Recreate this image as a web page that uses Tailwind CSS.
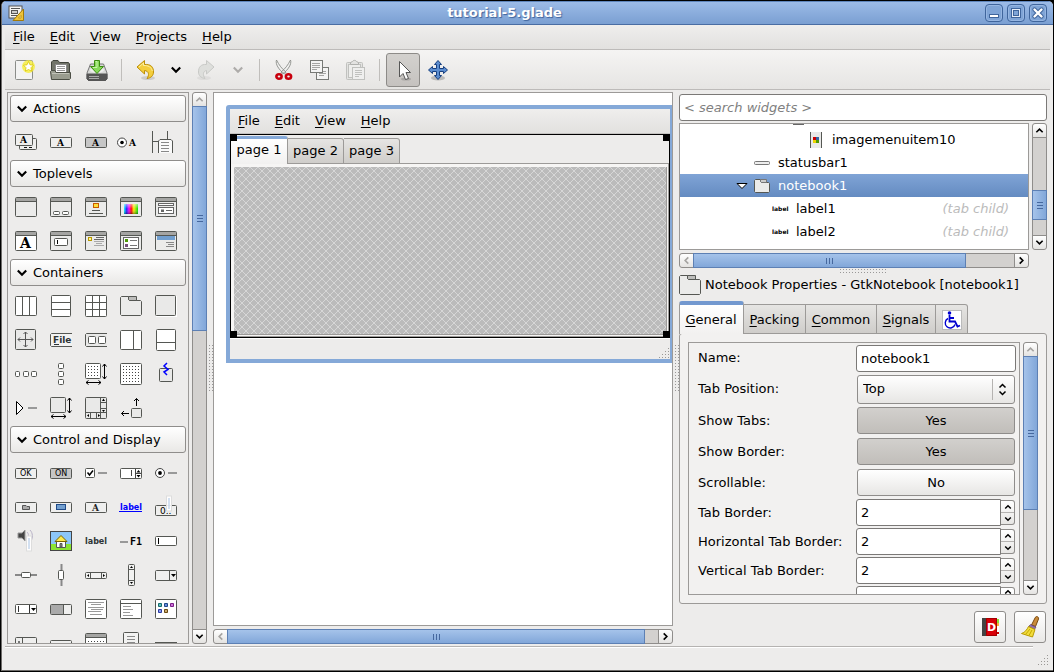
<!DOCTYPE html>
<html lang="en">
<head>
<meta charset="utf-8">
<title>tutorial-5.glade</title>
<script src="https://cdn.jsdelivr.net/npm/@tailwindcss/browser@4"></script>
</head>
<body class="h-screen overflow-hidden bg-black font-['DejaVu_Sans',sans-serif] text-[13px] leading-4 text-black">

<svg class="absolute size-0" aria-hidden="true">
  <defs>
    <linearGradient id="rainbow"><stop offset="0" stop-color="#0ff"/><stop offset=".18" stop-color="#22f"/><stop offset=".36" stop-color="#f0f"/><stop offset=".52" stop-color="#f00"/><stop offset=".7" stop-color="#fe0"/><stop offset="1" stop-color="#0d0"/></linearGradient>
    <linearGradient id="shade" x2="0" y2="1"><stop offset="0" stop-color="#fff" stop-opacity=".55"/><stop offset=".5" stop-color="#fff" stop-opacity="0"/><stop offset="1" stop-color="#000" stop-opacity=".4"/></linearGradient>
    <pattern id="dots" width="3" height="3" patternUnits="userSpaceOnUse"><rect x="1" y="1" width="1" height="1" fill="#444"/></pattern>
    <pattern id="hatch" width="8" height="8" patternUnits="userSpaceOnUse"><rect width="8" height="8" fill="#bbb"/><path d="M0 0h1v1H0zM1 1h1v1H1zM2 2h1v1H2zM3 3h1v1H3zM4 4h1v1H4zM5 5h1v1H5zM6 6h1v1H6zM7 7h1v1H7zM7 0h1v1H7zM6 1h1v1H6zM5 2h1v1H5zM4 3h1v1H4zM3 4h1v1H3zM2 5h1v1H2zM1 6h1v1H1zM0 7h1v1H0z" fill="#d6d6d6" shape-rendering="crispEdges"/></pattern>
    <symbol id="win" viewBox="0 0 24 24"><rect x="1.500" y="2.500" width="21" height="19" rx="1" fill="#ebebea" stroke="#555753"/><path d="M2 4.500H22" stroke="#a5a5a3" stroke-width="3"/><path d="M2 6.500H22" stroke="#555753"/></symbol>
    <symbol id="btn" viewBox="0 0 24 24"><rect x="1.500" y="7.500" width="21" height="10" rx="1" fill="#efefee" stroke="#555753"/></symbol>
    <symbol id="folder" viewBox="0 0 24 24"><path d="M1.500 20.500V3.500L2.500 2.500H9.500V5.500L10.500 6.500H21.500L22.500 7.500V20.500L21.500 21.500H2.500Z" fill="#ebebea" stroke="#555753"/><path d="M9.500 2.500H17.500V6.500H10.500L9.500 5.500Z" fill="#bdbdbb" stroke="#555753"/></symbol>
    <symbol id="size" viewBox="0 0 24 24"><path d="M20.500 2V17M18.500 4.500L20.500 2L22.500 4.500M18.500 14.500L20.500 17L22.500 14.500M2 20.500H17M4.500 18.500L2 20.500L4.500 22.500M14.500 18.500L17 20.500L14.500 22.500" fill="none" stroke="#000"/></symbol>
    <symbol id="down" viewBox="0 0 10 10"><path d="M1.500 3L5 6.500L8.500 3" fill="none" stroke="currentColor" stroke-width="1.800"/></symbol>
    <symbol id="up" viewBox="0 0 10 10"><path d="M1.500 7L5 3.500L8.500 7" fill="none" stroke="currentColor" stroke-width="1.800"/></symbol>
    <symbol id="left" viewBox="0 0 10 10"><path d="M7 1.500L3.500 5L7 8.500" fill="none" stroke="currentColor" stroke-width="1.800"/></symbol>
    <symbol id="right" viewBox="0 0 10 10"><path d="M3 1.500L6.500 5L3 8.500" fill="none" stroke="currentColor" stroke-width="1.800"/></symbol>
    <symbol id="corner" viewBox="0 0 12 12"><path d="M10 1h1v1h-1zM7 4h1v1H7zM10 4h1v1h-1zM4 7h1v1H4zM7 7h1v1H7zM10 7h1v1h-1zM1 10h1v1H1zM4 10h1v1H4zM7 10h1v1H7zM10 10h1v1h-1z" fill="#9a9895"/></symbol>
  </defs>
</svg>

<div class="flex h-full flex-col p-px">
<div class="flex min-h-0 flex-1 flex-col overflow-hidden rounded-t-[5px] border-b border-l border-[#6e6c6a] bg-[#edeceb]">

  <!-- Title bar -->
  <header class="flex h-6 shrink-0 items-center border-b border-t border-b-[#4a6da3] border-t-[#5f86bd] bg-linear-to-b from-[#9cbbe7] to-[#7a9fd2] pl-[6px] pr-[6px]">
    <svg class="size-4" viewBox="0 0 16 16"><rect x="1" y="1" width="13" height="12" fill="#f4f4f2" stroke="#555"/><path d="M3 3.500H12M3 10.500H9" stroke="#555"/><rect x="3.500" y="5.500" width="6" height="3" fill="#ccc" stroke="#555"/><path d="M15.500 4V15.500H5Z" fill="#edc33a" stroke="#a37a08"/><path d="M13 10.500V13H10.500Z" fill="#fff3b0" stroke="#a37a08" stroke-width=".6"/></svg>
    <h1 class="flex-1 text-center font-bold text-white [text-shadow:1px_1px_1px_#3f639b]">tutorial-5.glade</h1>
    <div class="flex gap-1 [&>button]:flex [&>button]:size-[18px] [&>button]:items-center [&>button]:justify-center [&>button]:rounded-[4px] [&>button]:border [&>button]:border-[#3f659c] [&>button]:bg-[#7fa4d6] [&>button]:shadow-[inset_0_0_0_1px_#96b6e2] [&_svg]:shrink-0">
      <button aria-label="Minimize"><svg class="size-4" viewBox="0 0 16 16"><rect x="3.500" y="9.500" width="9" height="3" fill="#fff" stroke="#3f659c"/></svg></button>
      <button aria-label="Maximize"><svg class="size-4" viewBox="0 0 16 16"><rect x="3.500" y="3.500" width="9" height="9" fill="#e6edf8" stroke="#3f659c"/><rect x="5.500" y="5.500" width="5" height="5" fill="#7fa4d6" stroke="#3f659c"/></svg></button>
      <button aria-label="Close"><svg class="size-4" viewBox="0 0 16 16"><path d="M4.500 4.500L11.500 11.500M11.500 4.500L4.500 11.500" stroke="#3f659c" stroke-width="4.400" stroke-linecap="round"/><path d="M4.500 4.500L11.500 11.500M11.500 4.500L4.500 11.500" stroke="#fff" stroke-width="2.400" stroke-linecap="round"/></svg></button>
    </div>
  </header>

  <!-- Menu bar -->
  <nav class="mx-[3px] flex h-[25px] shrink-0 items-center gap-px border-b border-[#bdbbb9] bg-linear-to-b from-[#efeeed] to-[#e2e1df] pl-px [&>button]:px-[7px] [&_u]:underline-offset-2">
    <button><u>F</u>ile</button><button><u>E</u>dit</button><button><u>V</u>iew</button><button><u>P</u>rojects</button><button><u>H</u>elp</button>
  </nav>

  <!-- Toolbar -->
  <div role="toolbar" class="mx-[3px] flex h-10 shrink-0 items-center border-b border-[#bdbbb9] bg-linear-to-b from-[#f5f4f3] to-[#e6e5e3] pl-[2px] [&>button]:flex [&>button]:h-[34px] [&>button]:w-9 [&>button]:items-center [&>button]:justify-center [&_svg]:size-6">
    <button aria-label="New"><svg viewBox="0 0 24 24"><rect x="2.500" y="2.500" width="17" height="19" rx="1" fill="#f3f3f2" stroke="#8b8d89"/><circle cx="15.500" cy="8.500" r="6.500" fill="#f6ee38" fill-opacity=".8"/><path d="M15.500 3.500L17 6.800L20.500 7.200L18 9.700L18.600 13.200L15.500 11.500L12.400 13.200L13 9.700L10.500 7.200L14 6.800Z" fill="#fff" stroke="#dcc800" stroke-width=".8"/></svg></button>
    <button aria-label="Open"><svg viewBox="0 0 24 24"><path d="M2.500 20V4L4 2.500H9L10.500 4.500H19.500L20.500 6V20Z" fill="#72756a" stroke="#41443c"/><path d="M6.500 6.500H17.500V16H6.500Z" fill="#fff" stroke="#888"/><path d="M8 8.500H16M8 10.500H16M8 12.500H16" stroke="#999"/><path d="M1.500 13.500L2.500 12.500H6L7 14.500H21.500V20.500L20.500 21.500H2.500Z" fill="#999c8f" stroke="#4b4e45"/><path d="M3 15.500H20" stroke="#c0c2b8"/></svg></button>
    <button aria-label="Save"><svg viewBox="0 0 24 24"><path d="M2 15L5.500 6H18.500L22 15V21L20.500 22.500H3.500L2 21Z" fill="#d8d9d7" stroke="#777"/><path d="M2 16H22V21L20.500 22.500H3.500L2 21Z" fill="#555" stroke="#555"/><ellipse cx="12" cy="12" rx="7" ry="3" fill="#eee"/><path d="M4 18.500H14M4 20.500H14" stroke="#aaa"/><path d="M9.500 2.500H14.500V8.500H18.500L12 15.500L5.500 8.500H9.500Z" fill="#86d957" stroke="#3c8a10"/><path d="M10.500 3.500H12V9.500H8" stroke="#caf5ab" fill="none"/></svg></button>
    <span class="flex w-3 justify-center"><i class="h-[22px] w-px bg-[#c0bebb]"></i></span>
    <button aria-label="Undo"><svg viewBox="0 0 24 24"><ellipse cx="15" cy="20" rx="7" ry="2" fill="#000" fill-opacity=".12"/><path d="M4 9L11.500 2.500V6.500C18 6 20.500 9 20.500 14C20.500 17.500 18 20 14 20.500C16.500 17 16 13 11.500 12.500V16Z" fill="#f4ce3c" stroke="#bd8f08"/><path d="M6 9L10.500 5V7.500C15 7.300 18.500 9 19.300 13" fill="none" stroke="#fdf0a0"/></svg></button>
    <button aria-label="Undo history" class="w-[26px]! text-black"><svg class="size-3!"><use href="#down"/></svg></button>
    <button aria-label="Redo" disabled><svg viewBox="0 0 24 24"><ellipse cx="9" cy="20" rx="7" ry="2" fill="#000" fill-opacity=".05"/><path d="M19 9L11.500 2.500V6.500C6 6 3.500 9 3.500 14C3.500 17.500 6 20 10 20.500C7.500 17 8 13 11.500 12.500V16Z" fill="#dedfdc" stroke="#c8c9c6"/></svg></button>
    <button aria-label="Redo history" disabled class="w-[26px]! text-[#aeacaa]"><svg class="size-3!"><use href="#down"/></svg></button>
    <span class="flex w-4 justify-center"><i class="h-[22px] w-px bg-[#c0bebb]"></i></span>
    <button aria-label="Cut" class="w-[34px]!"><svg viewBox="0 0 24 24"><path d="M4.500 2C3 6 7 12 12.500 16L14 14C10 11 7 7 4.500 2ZM18.500 2C20 6 16 12 10.500 16L9 14C13 11 16 7 18.500 2Z" fill="#f2f2f1" stroke="#8a8c88" stroke-width=".9"/><ellipse cx="7" cy="18.500" rx="2.600" ry="2.200" fill="#eee" stroke="#c8000d" stroke-width="2.600"/><ellipse cx="16.500" cy="18.500" rx="2.600" ry="2.200" fill="#eee" stroke="#c8000d" stroke-width="2.600"/></svg></button>
    <button aria-label="Copy"><svg viewBox="0 0 24 24"><rect x="9.500" y="9.500" width="12" height="12" fill="#f4f4f3" stroke="#777975"/><path d="M12 13.500H19M12 15.500H19M12 17.500H17" stroke="#a5a5a3"/><rect x="3.500" y="2.500" width="12" height="12" fill="#f4f4f3" stroke="#777975"/><path d="M5 5.500H13M5 7.500H13M5 9.500H13M5 11.500H10" stroke="#a5a5a3"/></svg></button>
    <button aria-label="Paste" disabled><svg viewBox="0 0 24 24" fill="#e3e3e1" stroke="#c0c1be"><rect x="3.500" y="4.500" width="16" height="17" rx="1"/><rect x="5.500" y="6.500" width="12" height="13" fill="#eeeeec"/><path d="M7.500 6.500V4.500L9.500 3.500C10 2 13 2 13.500 3.500L15.500 4.500V6.500Z" stroke="#b0b1ae"/><rect x="9.500" y="9.500" width="12" height="12" fill="#efefee"/><path d="M12 12.500H19M12 14.500H19M12 16.500H19M12 18.500H16"/></svg></button>
    <span class="flex w-[13px] justify-center"><i class="h-[22px] w-px bg-[#c0bebb]"></i></span>
    <button aria-label="Select widgets" aria-pressed="true" class="w-[34px]! rounded-[3px] border border-[#8d8b88] bg-linear-to-b from-[#d3d1ce] to-[#c5c2bf]"><svg viewBox="0 0 24 24"><ellipse cx="15" cy="21" rx="5" ry="1.500" fill="#000" fill-opacity=".15"/><path d="M8.500 3.500V19L12 15.500L14.500 21.500L17.500 20.500L15 14.500H19.500Z" fill="#fff" stroke="#555"/></svg></button>
    <button aria-label="Drag resize"><svg viewBox="0 0 24 24"><ellipse cx="12" cy="20" rx="7" ry="2.500" fill="#000" fill-opacity=".2"/><path d="M12 2.500L15.500 6.500H13.500V10.500H17.500V8.500L21.500 12L17.500 15.500V13.500H13.500V17.500H15.500L12 21.500L8.500 17.500H10.500V13.500H6.500V15.500L2.500 12L6.500 8.500V10.500H10.500V6.500H8.500Z" fill="#5b8dd0" stroke="#163f80"/></svg></button>
  </div>

  <main class="flex min-h-0 flex-1 pb-[2px] pl-[5px] pr-[6px] pt-[2px]">

    <!-- Palette -->
    <section aria-label="Palette" class="w-[182px] shrink-0 overflow-hidden border border-[#9c9a98] pt-[2px]
      [&>h2]:mx-[2px] [&>h2]:flex [&>h2]:h-[27px] [&>h2]:items-center [&>h2]:rounded-[3px] [&>h2]:border [&>h2]:border-[#8f8d8b] [&>h2]:bg-linear-to-b [&>h2]:from-white [&>h2]:to-[#e9e8e6] [&_h2>button]:flex [&_h2>button]:flex-1 [&_h2>button]:items-center [&_h2>button]:gap-[5px] [&_h2>button]:pl-[5px] [&_h2_svg]:size-3
      [&>div]:grid [&>div]:grid-cols-[repeat(5,35px)] [&>div]:pb-px [&>div]:pt-[3px] [&>div>button]:flex [&>div>button]:h-[34px] [&>div>button]:items-center [&>div>button]:pl-[6px] [&>div_svg]:size-6 [&>div_svg]:shrink-0 [&>div_svg]:overflow-visible">
      <h2><button aria-expanded="true"><svg><use href="#down"/></svg>Actions</button></h2>
      <div>
        <button aria-label="Action group"><svg viewBox="0 0 24 24"><rect x="5.500" y="8.500" width="17" height="11" rx="1" fill="#efefee" stroke="#555753"/><path d="M10 17.500H13M15 17.500H18" stroke="#111"/><rect x="1.500" y="4.500" width="17" height="11" rx="1" fill="#efefee" stroke="#555753"/><text x="6" y="13" font-family="DejaVu Serif" font-weight="bold" font-size="9">A</text></svg></button>
        <button aria-label="Action"><svg viewBox="0 0 24 24"><use href="#btn"/><text x="8" y="16" font-family="DejaVu Serif" font-weight="bold" font-size="9">A</text></svg></button>
        <button aria-label="Toggle action"><svg viewBox="0 0 24 24"><rect x="1.500" y="7.500" width="21" height="10" rx="1" fill="#c6c6c6" stroke="#555753"/><text x="8" y="16" font-family="DejaVu Serif" font-weight="bold" font-size="9">A</text></svg></button>
        <button aria-label="Radio action"><svg viewBox="0 0 24 24"><circle cx="3" cy="12.500" r="4.500" fill="#fff" stroke="#444"/><circle cx="3" cy="12.500" r="1.800"/><text x="10" y="16" font-family="DejaVu Serif" font-weight="bold" font-size="9">A</text></svg></button>
        <button aria-label="Recent action"><svg viewBox="0 0 24 24"><path d="M-1.500 1V23M-1 11.500H4M13.500 1V10" stroke="#555753"/><path d="M4.500 23V11L6 9.500H17L18.500 11V23" fill="#fafafa" stroke="#555753"/><path d="M7 12.500H15M7 15.500H15M7 18.500H15M7 21.500H15" stroke="#888"/></svg></button>
      </div>
      <h2><button aria-expanded="true"><svg><use href="#down"/></svg>Toplevels</button></h2>
      <div>
        <button aria-label="Window"><svg><use href="#win"/></svg></button>
        <button aria-label="Dialog box"><svg viewBox="0 0 24 24"><use href="#win"/><rect x="4.500" y="16.500" width="6" height="3" rx="1" fill="#fff" stroke="#555753"/><rect x="13.500" y="16.500" width="6" height="3" rx="1" fill="#fff" stroke="#555753"/></svg></button>
        <button aria-label="About dialog"><svg viewBox="0 0 24 24"><use href="#win"/><rect x="9.500" y="8.500" width="5" height="4" fill="#fcdf3c" stroke="#c85a00"/><path d="M8 15.500H16M5 18.500H19" stroke="#555753"/></svg></button>
        <button aria-label="Color dialog"><svg viewBox="0 0 24 24"><use href="#win"/><rect x="5" y="9" width="14" height="10" fill="url(#rainbow)"/><rect x="5" y="9" width="14" height="10" fill="url(#shade)"/></svg></button>
        <button aria-label="File dialog"><svg viewBox="0 0 24 24"><use href="#win"/><g fill="#fff" stroke="#666"><rect x="4.500" y="8.500" width="15" height="2"/><rect x="4.500" y="12.500" width="15" height="6"/><rect x="7.500" y="15" width="2" height="1.500"/><path d="M12 15.500H18"/></g></svg></button>
        <button aria-label="Font dialog"><svg viewBox="0 0 24 24"><use href="#win"/><rect x="2" y="7" width="20" height="14" fill="#fff"/><text x="6" y="19" font-family="DejaVu Serif" font-weight="bold" font-size="14">A</text></svg></button>
        <button aria-label="Input dialog"><svg viewBox="0 0 24 24"><use href="#win"/><rect x="5.500" y="9.500" width="13" height="7" rx="1" fill="#fff" stroke="#555753"/><path d="M8.500 11V15" stroke="#000"/></svg></button>
        <button aria-label="Message dialog"><svg viewBox="0 0 24 24"><use href="#win"/><rect x="4.500" y="8.500" width="3" height="3" fill="#fff29a" stroke="#b79a00"/><path d="M12 8.500H20M10 10.500H20" stroke="#666"/><path d="M10 12.500H20M12 14.500H18M10 16.500H20" stroke="#aaa"/></svg></button>
        <button aria-label="Recent chooser dialog"><svg viewBox="0 0 24 24"><use href="#win"/><rect x="4.500" y="8.500" width="15" height="11" fill="#fff" stroke="#666"/><path d="M6 10h3v3H6z" fill="#4e9a06"/><path d="M6 15h3v3H6z" fill="#75507b"/><path d="M11 11.500H18M11 16.500H18" stroke="#777"/></svg></button>
        <button aria-label="Assistant"><svg viewBox="0 0 24 24"><use href="#win"/><path d="M3 7h18v4H3z" fill="#729fcf"/><path d="M12 13.500H20M14 15.500H20M12 17.500H20" stroke="#888"/></svg></button>
      </div>
      <h2><button aria-expanded="true"><svg><use href="#down"/></svg>Containers</button></h2>
      <div>
        <button aria-label="Horizontal box"><svg viewBox="0 0 24 24" fill="#fff" stroke="#555753"><rect x="1.500" y="2.500" width="21" height="19" rx="1"/><path d="M8.500 3V21M15.500 3V21"/></svg></button>
        <button aria-label="Vertical box"><svg viewBox="0 0 24 24" fill="#fff" stroke="#555753"><rect x="2.500" y="1.500" width="19" height="21" rx="1"/><path d="M3 8.500H21M3 15.500H21"/></svg></button>
        <button aria-label="Table"><svg viewBox="0 0 24 24" fill="#fff" stroke="#555753"><rect x="1.500" y="1.500" width="21" height="21" rx="1"/><path d="M2 8.500H22M2 15.500H22M8.500 2V22M15.500 2V22"/></svg></button>
        <button aria-label="Notebook"><svg><use href="#folder"/></svg></button>
        <button aria-label="Frame"><svg viewBox="0 0 24 24"><rect x="2.500" y="2.500" width="20" height="20" fill="none" stroke="#fff"/><rect x="1.500" y="1.500" width="20" height="20" rx="1" fill="#e9e9e8" stroke="#555753"/></svg></button>
        <button aria-label="Aspect frame"><svg viewBox="0 0 24 24"><rect x="1.500" y="1.500" width="20" height="20" rx="1" fill="#e9e9e8" stroke="#555753"/><path d="M11.500 4V19M4 11.500H19M9.500 6L11.500 4L13.500 6M9.500 17L11.500 19L13.500 17M6 9.500L4 11.500L6 13.500M17 9.500L19 11.500L17 13.500" fill="none" stroke="#555"/></svg></button>
        <button aria-label="Menu bar"><svg viewBox="0 0 24 24"><path d="M23 5.500H2.500L1.500 6.500V17.500L2.500 18.500H23" fill="#f2f2f1" stroke="#555753"/><text x="4" y="15" font-family="DejaVu Sans" font-weight="bold" font-size="9" fill="#2e3436">File</text><path d="M5 16.500H10" stroke="#2e3436"/></svg></button>
        <button aria-label="Toolbar"><svg viewBox="0 0 24 24"><path d="M23 5.500H2.500L1.500 6.500V17.500L2.500 18.500H23" fill="#e9e9e8" stroke="#555753"/><rect x="4.500" y="8.500" width="7" height="7" rx="1" fill="#fff" stroke="#555753"/><rect x="14.500" y="8.500" width="7" height="7" rx="1" fill="#fff" stroke="#555753"/></svg></button>
        <button aria-label="Horizontal panes"><svg viewBox="0 0 24 24" fill="#fff" stroke="#555753"><rect x="1.500" y="2.500" width="21" height="19" rx="1"/><path d="M14.500 3V21"/></svg></button>
        <button aria-label="Vertical panes"><svg viewBox="0 0 24 24" fill="#fff" stroke="#555753"><rect x="2.500" y="1.500" width="19" height="21" rx="1"/><path d="M3 14.500H21"/></svg></button>
        <button aria-label="Horizontal button box"><svg viewBox="0 0 24 24" fill="#fff" stroke="#555753"><rect x="1.500" y="9.500" width="4" height="5" rx="1"/><rect x="9.500" y="9.500" width="5" height="5" rx="1"/><rect x="17.500" y="9.500" width="5" height="5" rx="1"/></svg></button>
        <button aria-label="Vertical button box"><svg viewBox="0 0 24 24" fill="#fff" stroke="#555753"><rect x="9.500" y="1.500" width="5" height="5" rx="1"/><rect x="9.500" y="9.500" width="5" height="5" rx="1"/><rect x="9.500" y="17.500" width="5" height="5" rx="1"/></svg></button>
        <button aria-label="Layout"><svg viewBox="0 0 24 24"><rect x="1.500" y="1.500" width="15" height="15" rx="1" fill="#fff" stroke="#555753"/><rect x="3" y="3" width="12" height="12" fill="url(#dots)"/><use href="#size"/></svg></button>
        <button aria-label="Fixed"><svg viewBox="0 0 24 24"><rect x="1.500" y="1.500" width="21" height="21" rx="1" fill="#fff" stroke="#555753"/><rect x="3" y="3" width="18" height="18" fill="url(#dots)"/></svg></button>
        <button aria-label="Event box"><svg viewBox="0 0 24 24"><rect x="5.500" y="6.500" width="13" height="13" rx="1" fill="#e9e9e8" stroke="#555753"/><path d="M13 1L10 4L14 7.500L10 10L13 13" fill="none" stroke="#00f" stroke-width="1.500"/></svg></button>
        <button aria-label="Expander"><svg viewBox="0 0 24 24"><path d="M2.500 5.500L9 12L2.500 18.500Z" fill="#fff" stroke="#000"/><path d="M14 12H23" stroke="#999" stroke-width="2"/></svg></button>
        <button aria-label="Viewport"><svg viewBox="0 0 24 24"><rect x="1.500" y="1.500" width="15" height="15" rx="1" fill="#e9e9e8" stroke="#555753"/><use href="#size"/></svg></button>
        <button aria-label="Scrolled window"><svg viewBox="0 0 24 24"><rect x="1.500" y="1.500" width="21" height="21" rx="1" fill="#e9e9e8" stroke="#555753"/><path d="M16.500 2V22M2 16.500H22M17 6.500H22M17 12.500H22M6.500 17V22M12.500 17V22" stroke="#555753"/><path d="M18 5L19.500 2.500L21 5ZM18 14L19.500 16L21 14ZM5 18V21L3 19.500ZM14 18V21L16 19.500Z"/></svg></button>
        <button aria-label="Alignment"><svg viewBox="0 0 24 24"><rect x="12.500" y="12.500" width="10" height="9" rx="1" fill="#e9e9e8" stroke="#555753"/><path d="M17.500 10V2.500M15 5L17.500 2.500L20 5M10 17.500H2.500M5 15L2.500 17.500L5 20" fill="none" stroke="#000"/></svg></button>
      </div>
      <h2><button aria-expanded="true"><svg><use href="#down"/></svg>Control and Display</button></h2>
      <div>
        <button aria-label="Button"><svg viewBox="0 0 24 24"><use href="#btn"/><text x="6" y="15" font-family="DejaVu Sans" font-size="8">OK</text></svg></button>
        <button aria-label="Toggle button"><svg viewBox="0 0 24 24"><rect x="1.500" y="7.500" width="21" height="10" rx="1" fill="#c6c6c6" stroke="#555753"/><text x="6" y="15" font-family="DejaVu Sans" font-size="8">ON</text></svg></button>
        <button aria-label="Check button"><svg viewBox="0 0 24 24"><rect x="1.500" y="7.500" width="9" height="9" rx="1" fill="#fff" stroke="#555753"/><path d="M3.500 11.500L5.500 14L9 9.500" fill="none" stroke="#000" stroke-width="1.500"/><path d="M14 12H23" stroke="#999" stroke-width="2"/></svg></button>
        <button aria-label="Spin button"><svg viewBox="0 0 24 24"><rect x="1.500" y="7.500" width="21" height="10" rx="1" fill="#fff" stroke="#555753"/><path d="M16.500 8V17M17 12.500H22M12.500 9V15" stroke="#444"/><path d="M17.500 11.500L19.500 9L21.500 11.500ZM17.500 14L19.500 16.500L21.500 14Z"/></svg></button>
        <button aria-label="Radio button"><svg viewBox="0 0 24 24"><circle cx="6" cy="12" r="4.500" fill="#fff" stroke="#444"/><circle cx="6" cy="12" r="1.900"/><path d="M14 12H23" stroke="#999" stroke-width="2"/></svg></button>

        <button aria-label="File chooser button"><svg viewBox="0 0 24 24"><use href="#btn"/><path d="M8.500 14.500V10.500H12L13 11.500H15.500V14.500Z" fill="#aaa" stroke="#555"/></svg></button>
        <button aria-label="Color button"><svg viewBox="0 0 24 24"><use href="#btn"/><rect x="7.500" y="9.500" width="9" height="5" fill="#729fcf" stroke="#204a87"/></svg></button>
        <button aria-label="Font button"><svg viewBox="0 0 24 24"><use href="#btn"/><text x="8" y="16" font-family="DejaVu Serif" font-weight="bold" font-size="9" fill="#222">A</text></svg></button>
        <button aria-label="Link button"><svg viewBox="0 0 24 24"><text x="1" y="15" font-family="DejaVu Sans" font-weight="bold" font-size="8" fill="#00f">label</text><path d="M0 16.500H23" stroke="#00f"/></svg></button>
        <button aria-label="Scale button"><svg viewBox="0 0 24 24"><rect x="1.500" y="10.500" width="21" height="10" rx="1" fill="#efefee" stroke="#555753"/><text x="6" y="19" font-family="DejaVu Sans" font-size="9">0..</text><rect x="12.500" y="1" width="5" height="15" fill="#fff" fill-opacity=".9" stroke="#ddd"/><path d="M15 3V14" stroke="#a9c4e4"/></svg></button>

        <button aria-label="Volume button"><svg viewBox="0 0 24 24"><path d="M4 4H8L11 1V12L8 9H4Z" fill="#444" stroke="#999"/><path d="M13 3C15 5 15 8 13 10M16 1C19 4 19 9 17 12" fill="none" stroke="#b9b3c8"/><rect x="12.500" y="7" width="5" height="15" fill="#fff" fill-opacity=".9" stroke="#ddd"/><path d="M15 9V20" stroke="#a9c4e4"/></svg></button>
        <button aria-label="Image"><svg viewBox="0 0 24 24"><rect x="1.500" y="2.500" width="21" height="19" fill="#8cc6f9" stroke="#444"/><path d="M2 15h20v6H2z" fill="#8ae234"/><path d="M7.500 12V18.500H16.500V12" fill="#fff" stroke="#555"/><path d="M6 12.500L12 6.500L18 12.500Z" fill="#fce94f" stroke="#7a6400"/><path d="M11 14.500h2V18h-2z" fill="#888" stroke="#555"/></svg></button>
        <button aria-label="Label"><svg viewBox="0 0 24 24"><text x="1" y="15" font-family="DejaVu Sans" font-weight="bold" font-size="8" fill="#2e3436">label</text></svg></button>
        <button aria-label="Accelerator label"><svg viewBox="0 0 24 24"><path d="M1 13H9" stroke="#999" stroke-width="2"/><text x="11" y="16" font-family="DejaVu Sans Mono" font-weight="bold" font-size="10">F1</text></svg></button>
        <button aria-label="Text entry"><svg viewBox="0 0 24 24"><rect x="1.500" y="7.500" width="21" height="9" rx="1" fill="#fff" stroke="#555753"/><path d="M4.500 9V15" stroke="#000"/></svg></button>

        <button aria-label="Horizontal scale"><svg viewBox="0 0 24 24"><path d="M1 12H23" stroke="#888" stroke-width="2"/><rect x="7.500" y="9.500" width="9" height="5" rx="1" fill="#fff" stroke="#555753"/></svg></button>
        <button aria-label="Vertical scale"><svg viewBox="0 0 24 24"><path d="M12.500 1V23" stroke="#888" stroke-width="2"/><rect x="9.500" y="7.500" width="5" height="9" rx="1" fill="#fff" stroke="#555753"/></svg></button>
        <button aria-label="Horizontal scrollbar"><svg viewBox="0 0 24 24"><rect x="1.500" y="9.500" width="21" height="6" rx="1" fill="#f2f2f1" stroke="#555753"/><path d="M6.500 10V15M17.500 10V15" stroke="#555753"/><path d="M5 11V14L3 12.500ZM19 11V14L21 12.500Z"/></svg></button>
        <button aria-label="Vertical scrollbar"><svg viewBox="0 0 24 24"><rect x="9.500" y="1.500" width="6" height="21" rx="1" fill="#f2f2f1" stroke="#555753"/><path d="M10 6.500H15M10 17.500H15" stroke="#555753"/><path d="M11 5H14L12.500 3ZM11 19H14L12.500 21Z"/></svg></button>
        <button aria-label="Combo box"><svg viewBox="0 0 24 24"><use href="#btn"/><path d="M15.500 8V17" stroke="#555753"/><path d="M17 11H22L19.500 14Z"/></svg></button>

        <button aria-label="Combo box entry"><svg viewBox="0 0 24 24"><rect x="1.500" y="7.500" width="21" height="9" rx="1" fill="#fff" stroke="#555753"/><path d="M15.500 8V16M4.500 9V15" stroke="#333"/><path d="M17 11H22L19.500 14Z"/></svg></button>
        <button aria-label="Progress bar"><svg viewBox="0 0 24 24"><use href="#btn"/><path d="M2 8H14.500V17H2Z" fill="#aaa"/><path d="M14.500 8V17" stroke="#555753"/></svg></button>
        <button aria-label="Text view"><svg viewBox="0 0 24 24"><rect x="1.500" y="2.500" width="21" height="19" rx="1" fill="#fff" stroke="#555753"/><path d="M4 5.500H20M7 7.500H17M4 10.500H20M7 12.500H19M4 14.500H17M6 17.500H18" stroke="#999"/></svg></button>
        <button aria-label="Tree view"><svg viewBox="0 0 24 24"><rect x="1.500" y="2.500" width="21" height="19" rx="1" fill="#fff" stroke="#555753"/><path d="M2 6.500H22" stroke="#555753"/><path d="M4 9.500H12M4 12.500H14M4 15.500H11M4 18.500H14" stroke="#999"/></svg></button>
        <button aria-label="Icon view"><svg viewBox="0 0 24 24"><rect x="1.500" y="2.500" width="21" height="19" rx="1" fill="#fff" stroke="#555753"/><path d="M4.500 6.500h3v3h-3z" fill="#5cc0c0" stroke="#1a6a6a"/><path d="M10.500 6.500h3v3h-3z" fill="#6a8ae0" stroke="#204a87"/><path d="M16.500 6.500h3v3h-3z" fill="#d070d8" stroke="#7a208a"/><path d="M4.500 12.500h3v3h-3z" fill="#8a9af0" stroke="#2a3aa0"/><path d="M10.500 12.500h3v3h-3z" fill="#c8a870" stroke="#6a4a10"/></svg></button>

        <button aria-label="Handle box"><svg viewBox="0 0 24 24"><rect x="1.500" y="6.500" width="21" height="14" rx="1" fill="#efefee" stroke="#555753"/><path d="M8.500 7V20" stroke="#555753"/><path d="M4 10h2v2H4z" fill="#777"/></svg></button>
        <button aria-label="Status bar"><svg viewBox="0 0 24 24"><rect x="1.500" y="9.500" width="21" height="5" rx="1" fill="#efefee" stroke="#555753"/></svg></button>
        <button aria-label="Calendar"><svg viewBox="0 0 24 24"><use href="#win"/><rect x="2" y="7" width="20" height="14" fill="#fff"/><rect x="3" y="8" width="18" height="12" fill="url(#dots)"/></svg></button>
        <button aria-label="Popup menu"><svg viewBox="0 0 24 24"><rect x="4.500" y="1.500" width="15" height="21" rx="1" fill="#f2f2f1" stroke="#555753"/><path d="M8 5.500H16M8 8.500H16M8 11.500H16" stroke="#888"/></svg></button>
        <button aria-label="Separator"><svg viewBox="0 0 24 24"><path d="M1 12H23" stroke="#555753" stroke-width="2"/></svg></button>
      </div>
    </section>

    <!-- Palette scrollbar -->
    <div class="ml-[3px] flex w-[15px] shrink-0 flex-col rounded-[3px] border border-[#8f8d8b] bg-[#d3d1cf]">
      <button aria-label="Scroll up" class="flex h-[13px] items-center justify-center rounded-t-[3px] bg-linear-to-b from-white to-[#e4e3e1] text-[#a5a3a1]"><svg class="size-[9px]"><use href="#up"/></svg></button>
      <div class="-mx-px flex h-[225px] flex-col items-center justify-center gap-[2px] border border-[#5d80b4] bg-linear-to-r from-[#a5c3ea] to-[#82a7d9] [&>i]:h-px [&>i]:w-[6px] [&>i]:bg-[#46689e]"><i></i><i></i><i></i></div>
      <button aria-label="Scroll down" class="mt-auto flex h-[14px] items-center justify-center rounded-b-[3px] border-t border-[#8f8d8b] bg-linear-to-b from-white to-[#e4e3e1]"><svg class="size-[9px]"><use href="#down"/></svg></button>
    </div>

    <div class="flex w-[6px] shrink-0 items-center justify-center"><svg class="h-12 w-[5px]"><rect width="5" height="48" fill="url(#dots)" opacity=".5"/></svg></div>

    <!-- Design area -->
    <section aria-label="Design" class="flex min-w-0 flex-1 flex-col gap-[3px]">
      <div class="flex-1 overflow-hidden border border-[#9c9a98] bg-white pl-[12px] pt-3">
        <div class="rounded-tl-[3px] border-4 border-r-2 border-[#85a9d8] bg-[#edeceb]">
          <nav class="flex h-[25px] items-center gap-px border-b border-[#c5c3c1] bg-linear-to-b from-[#efeeed] to-[#e2e1df] pl-px [&>button]:px-[7px] [&_u]:underline-offset-2">
            <button><u>F</u>ile</button><button><u>E</u>dit</button><button><u>V</u>iew</button><button><u>H</u>elp</button>
          </nav>
          <div class="relative h-[204px] border border-black">
            <div role="tablist" class="flex h-[29px] items-end">
              <button role="tab" aria-selected="true" class="flex h-7 w-[57px] items-center justify-center rounded-t-[3px] border-r border-t-[3px] border-r-[#9c9a98] border-t-[#85a9d8] bg-linear-to-b from-white to-[#f2f1f0] pb-1">page 1</button>
              <button role="tab" class="flex h-[26px] w-[56px] items-center justify-center rounded-tr-[3px] border-b border-r border-t border-[#9c9a98] bg-linear-to-b from-[#e6e5e3] to-[#cfcdca]">page 2</button>
              <button role="tab" class="flex h-[26px] w-[56px] items-center justify-center rounded-tr-[3px] border-b border-r border-t border-[#9c9a98] bg-linear-to-b from-[#e6e5e3] to-[#cfcdca]">page 3</button>
              <span class="flex-1 border-b border-[#9c9a98]"></span>
            </div>
            <div class="flex h-[173px] flex-col border-b border-r border-[#9c9a98] bg-[#f6f5f4] pb-px pl-[3px] pr-px pt-[3px]">
              <svg class="w-full flex-1 border-b border-r border-[#9c9a98]"><rect width="100%" height="100%" fill="url(#hatch)"/></svg>
            </div>
            <i class="absolute -left-px -top-px size-[7px] bg-black"></i><i class="absolute -right-px -top-px size-[7px] bg-black"></i><i class="absolute -bottom-px -left-px size-[7px] bg-black"></i><i class="absolute -bottom-px -right-px size-[7px] bg-black"></i>
          </div>
          <div class="flex h-[21px] items-end justify-end border-t border-white"><svg class="size-3"><use href="#corner"/></svg></div>
        </div>
      </div>
      <div class="flex h-[15px] shrink-0 rounded-[3px] border border-[#8f8d8b] bg-[#d3d1cf]">
        <button aria-label="Scroll left" class="flex w-[13px] items-center justify-center rounded-l-[3px] bg-linear-to-b from-white to-[#e4e3e1] text-[#a5a3a1]"><svg class="size-[9px]"><use href="#left"/></svg></button>
        <div class="-my-px flex w-[418px] items-center justify-center gap-[2px] border border-[#5d80b4] bg-linear-to-b from-[#a5c3ea] to-[#82a7d9] [&>i]:h-[6px] [&>i]:w-px [&>i]:bg-[#46689e]"><i></i><i></i><i></i></div>
        <button aria-label="Scroll right" class="ml-auto flex w-[14px] items-center justify-center rounded-r-[3px] border-l border-[#8f8d8b] bg-linear-to-b from-white to-[#e4e3e1]"><svg class="size-[9px]"><use href="#right"/></svg></button>
      </div>
    </section>

    <div class="flex w-[6px] shrink-0 items-center justify-center"><svg class="h-12 w-[5px]"><rect width="5" height="48" fill="url(#dots)" opacity=".5"/></svg></div>

    <!-- Inspector and properties -->
    <aside class="flex w-[368px] shrink-0 flex-col pt-[2px]">
      <input type="search" aria-label="Search widgets" placeholder="&lt; search widgets &gt;" class="h-[27px] w-full shrink-0 rounded-[3px] border border-[#7b7977] bg-white px-1 outline-none placeholder:italic placeholder:text-[#808080]">
      <div class="mt-[2px] flex h-[127px] shrink-0 gap-[3px]">
        <ul role="tree" class="flex flex-1 flex-col overflow-hidden border border-[#9c9a98] bg-white [&>li]:flex [&>li]:h-[23px] [&>li]:shrink-0 [&>li]:items-center">
          <li class="h-1! items-start! pl-[113px]" aria-hidden="true"><i class="h-px w-[11px] bg-[#666]"></i></li>
          <li role="treeitem" class="gap-2 pl-[128px]"><svg class="size-4" viewBox="0 0 16 16"><path d="M2 0h12v16H2z" fill="#e9e9e8"/><path d="M2.500 0V16M13.500 0V16" stroke="#555753"/><path d="M5 5h3v3H5z" fill="#c00"/><path d="M8 5h3v3H8z" fill="#3465a4"/><path d="M5 8h3v3H5z" fill="#edd400"/><path d="M8 8h3v3H8z" fill="#4e9a06"/></svg>imagemenuitem10</li>
          <li role="treeitem" class="gap-2 pl-[74px]"><svg class="size-4" viewBox="0 0 16 16"><rect x=".5" y="6.500" width="15" height="3" rx="1" fill="#eee" stroke="#777"/></svg>statusbar1</li>
          <li role="treeitem" aria-selected="true" class="gap-2 bg-linear-to-b from-[#80a4d6] to-[#648bc1] pl-[56px] text-white"><svg class="-mr-[2px] h-4 w-3" viewBox="0 0 12 16"><path d="M1 5.500H11L6 10.500Z" fill="#fff" stroke="#000"/></svg><svg class="size-4" viewBox="0 0 16 16"><path d="M.5 13.500V2.500L1.500 1.500H6.500V3.500L7.500 4.500H14.500L15.500 5.500V13.500L14.500 14.500H1.500Z" fill="#ebebea" stroke="#555753"/><path d="M6.500 1.500H12.500V4.500H7.500L6.500 3.500Z" fill="#ccc" stroke="#777"/></svg>notebook1</li>
          <li role="treeitem" class="gap-2 pl-[92px]"><svg class="size-4 overflow-visible" viewBox="0 0 16 16"><text x="0" y="10" font-family="DejaVu Sans" font-weight="bold" font-size="6">label</text></svg>label1<em class="ml-auto pr-[19px] text-[#bbb]">(tab child)</em></li>
          <li role="treeitem" class="gap-2 pl-[92px]"><svg class="size-4 overflow-visible" viewBox="0 0 16 16"><text x="0" y="10" font-family="DejaVu Sans" font-weight="bold" font-size="6">label</text></svg>label2<em class="ml-auto pr-[19px] text-[#bbb]">(tab child)</em></li>
        </ul>
        <div class="flex w-[15px] flex-col rounded-[3px] border border-[#8f8d8b] bg-[#d3d1cf]">
          <button aria-label="Scroll up" class="flex h-[14px] items-center justify-center rounded-t-[3px] border-b border-[#8f8d8b] bg-linear-to-b from-white to-[#e4e3e1]"><svg class="size-[9px]"><use href="#up"/></svg></button>
          <div class="-mx-px mt-[52px] flex h-[30px] flex-col items-center justify-center gap-[2px] border border-[#5d80b4] bg-linear-to-r from-[#a5c3ea] to-[#82a7d9] [&>i]:h-px [&>i]:w-[6px] [&>i]:bg-[#46689e]"><i></i><i></i><i></i></div>
          <button aria-label="Scroll down" class="mt-auto flex h-[14px] items-center justify-center rounded-b-[3px] border-t border-[#8f8d8b] bg-linear-to-b from-white to-[#e4e3e1]"><svg class="size-[9px]"><use href="#down"/></svg></button>
        </div>
      </div>
      <div class="mr-[18px] mt-[3px] flex h-[15px] shrink-0 rounded-[3px] border border-[#8f8d8b] bg-[#d3d1cf]">
        <button aria-label="Scroll left" class="flex w-[13px] items-center justify-center rounded-l-[3px] bg-linear-to-b from-white to-[#e4e3e1] text-[#a5a3a1]"><svg class="size-[9px]"><use href="#left"/></svg></button>
        <div class="-my-px flex w-[273px] items-center justify-center gap-[2px] border border-[#5d80b4] bg-linear-to-b from-[#a5c3ea] to-[#82a7d9] [&>i]:h-[6px] [&>i]:w-px [&>i]:bg-[#46689e]"><i></i><i></i><i></i></div>
        <button aria-label="Scroll right" class="ml-auto flex w-[14px] items-center justify-center rounded-r-[3px] border-l border-[#8f8d8b] bg-linear-to-b from-white to-[#e4e3e1]"><svg class="size-[9px]"><use href="#right"/></svg></button>
      </div>
      <div class="flex h-[6px] shrink-0 justify-center"><svg class="h-[6px] w-12"><rect width="48" height="6" fill="url(#dots)" opacity=".5"/></svg></div>

      <h2 class="flex h-[22px] shrink-0 items-center gap-[3px]"><svg class="-ml-px size-6"><use href="#folder"/></svg>Notebook Properties - GtkNotebook [notebook1]</h2>

      <div role="tablist" class="z-10 -mb-px mt-[5px] flex h-[33px] shrink-0 items-end [&_u]:underline-offset-2">
        <button role="tab" aria-selected="true" class="flex h-[33px] w-[65px] items-center justify-center rounded-t-[3px] border-l border-r border-t-[4px] border-l-[#9c9a98] border-r-[#9c9a98] border-t-[#7298cf] bg-linear-to-b from-white to-[#f2f1f0] pr-px"><span><u>G</u>eneral</span></button>
        <button role="tab" class="flex h-[30px] w-[62px] items-center justify-center border-b border-r border-t border-[#9c9a98] bg-linear-to-b from-[#e6e5e3] to-[#cfcdca] pt-px"><span><u>P</u>acking</span></button>
        <button role="tab" class="flex h-[30px] w-[71px] items-center justify-center border-b border-r border-t border-[#9c9a98] bg-linear-to-b from-[#e6e5e3] to-[#cfcdca] pt-px"><span><u>C</u>ommon</span></button>
        <button role="tab" class="flex h-[30px] w-[59px] items-center justify-center border-b border-r border-t border-[#9c9a98] bg-linear-to-b from-[#e6e5e3] to-[#cfcdca] pt-px"><span><u>S</u>ignals</span></button>
        <button role="tab" aria-label="Accessibility" class="flex h-[30px] w-8 items-center justify-center rounded-tr-[3px] border-b border-r border-t border-[#9c9a98] bg-linear-to-b from-[#e6e5e3] to-[#cfcdca] pt-px"><svg class="size-5" viewBox="0 0 20 20"><rect x=".5" y=".5" width="19" height="19" fill="#fff" stroke="#bbb"/><circle cx="7.500" cy="3" r="1.800" fill="#0000d0"/><path d="M7.500 5V11.500H13L15.500 16.500L18 15.500M8 8H12" fill="none" stroke="#0000d0" stroke-width="1.800"/><path d="M6 8.500A5 5 0 1 0 13 14.500" fill="none" stroke="#0000d0" stroke-width="1.400"/></svg></button>
      </div>
      <div role="tabpanel" class="flex min-h-0 flex-1 gap-[3px] rounded-[3px] border border-[#9c9a98] bg-[#f2f1f0] p-2">
        <form class="min-w-0 flex-1 overflow-hidden border border-[#9c9a98] pl-[9px] pr-[3px] pt-px [&>div]:flex [&>div]:items-center [&>div>label]:w-[158px] [&>div>label]:shrink-0">
          <div class="mb-[2px] h-7"><label for="name">Name:</label><input id="name" value="notebook1" class="h-[27px] min-w-0 flex-1 rounded-[3px] border border-[#7b7977] bg-white px-1 outline-none"></div>
          <div class="mb-[3px] h-[30px]"><label for="pos">Tab Position:</label>
            <span class="relative flex flex-1 pl-px pr-px"><select id="pos" class="h-[29px] w-full appearance-none rounded-[3px] border border-[#8f8d8b] bg-linear-to-b from-white to-[#e7e6e4] px-[5px] outline-none"><option>Top</option><option>Bottom</option><option>Left</option><option>Right</option></select>
            <svg class="pointer-events-none absolute right-2 top-1 h-[21px] w-4" viewBox="0 0 16 21"><path d="M.5 0V21" stroke="#b5b3b1"/><path d="M7.500 8.500L10.500 5.500L13.500 8.500M7.500 12.500L10.500 15.500L13.500 12.500" fill="none" stroke="#000" stroke-width="1.500"/></svg></span></div>
          <div class="mb-1 h-[27px]"><label for="tabs">Show Tabs:</label><button type="button" id="tabs" aria-pressed="true" class="mx-px h-[27px] flex-1 rounded-[3px] border border-[#8f8d8b] bg-linear-to-b from-[#d2d0cd] to-[#c1beba]">Yes</button></div>
          <div class="mb-1 h-[27px]"><label for="border">Show Border:</label><button type="button" id="border" aria-pressed="true" class="mx-px h-[27px] flex-1 rounded-[3px] border border-[#8f8d8b] bg-linear-to-b from-[#d2d0cd] to-[#c1beba]">Yes</button></div>
          <div class="mb-[3px] h-[27px]"><label for="scroll">Scrollable:</label><button type="button" id="scroll" aria-pressed="false" class="mx-px h-[27px] flex-1 rounded-[3px] border border-[#8f8d8b] bg-linear-to-b from-white to-[#e7e6e4]">No</button></div>
          <div class="mb-[2px] h-[27px]"><label for="tb">Tab Border:</label><input id="tb" value="2" class="h-[27px] min-w-0 flex-1 rounded-l-[3px] border border-[#7b7977] bg-white px-1 outline-none"><span class="mr-px flex h-[25px] w-[14px] flex-col rounded-r-[3px] border border-l-0 border-[#8f8d8b] bg-linear-to-b from-white to-[#e7e6e4] [&>button]:flex [&>button]:flex-1 [&>button]:items-center [&>button]:justify-center [&_svg]:size-2"><button type="button" aria-label="Increase"><svg><use href="#up"/></svg></button><button type="button" aria-label="Decrease" class="border-t border-[#b5b3b1]"><svg><use href="#down"/></svg></button></span></div>
          <div class="mb-[2px] h-[27px]"><label for="hb">Horizontal Tab Border:</label><input id="hb" value="2" class="h-[27px] min-w-0 flex-1 rounded-l-[3px] border border-[#7b7977] bg-white px-1 outline-none"><span class="mr-px flex h-[25px] w-[14px] flex-col rounded-r-[3px] border border-l-0 border-[#8f8d8b] bg-linear-to-b from-white to-[#e7e6e4] [&>button]:flex [&>button]:flex-1 [&>button]:items-center [&>button]:justify-center [&_svg]:size-2"><button type="button" aria-label="Increase"><svg><use href="#up"/></svg></button><button type="button" aria-label="Decrease" class="border-t border-[#b5b3b1]"><svg><use href="#down"/></svg></button></span></div>
          <div class="mb-[2px] h-[27px]"><label for="vb">Vertical Tab Border:</label><input id="vb" value="2" class="h-[27px] min-w-0 flex-1 rounded-l-[3px] border border-[#7b7977] bg-white px-1 outline-none"><span class="mr-px flex h-[25px] w-[14px] flex-col rounded-r-[3px] border border-l-0 border-[#8f8d8b] bg-linear-to-b from-white to-[#e7e6e4] [&>button]:flex [&>button]:flex-1 [&>button]:items-center [&>button]:justify-center [&_svg]:size-2"><button type="button" aria-label="Increase"><svg><use href="#up"/></svg></button><button type="button" aria-label="Decrease" class="border-t border-[#b5b3b1]"><svg><use href="#down"/></svg></button></span></div>
          <div class="h-[27px] justify-end"><input aria-label="Current page" class="ml-[158px] h-[27px] min-w-0 flex-1 rounded-l-[3px] border border-[#7b7977] bg-white outline-none"><span class="mr-px flex h-[25px] w-[14px] flex-col rounded-r-[3px] border border-l-0 border-[#8f8d8b] bg-white [&_svg]:size-2"><button type="button" aria-label="Increase" class="flex justify-center"><svg><use href="#up"/></svg></button></span></div>
        </form>
        <div class="flex w-[15px] flex-col rounded-[3px] border border-[#8f8d8b] bg-[#d3d1cf]">
          <button aria-label="Scroll up" class="flex h-[13px] items-center justify-center rounded-t-[3px] bg-linear-to-b from-white to-[#e4e3e1] text-[#a5a3a1]"><svg class="size-[9px]"><use href="#up"/></svg></button>
          <div class="-mx-px flex h-[154px] flex-col items-center justify-center gap-[2px] border border-[#5d80b4] bg-linear-to-r from-[#a5c3ea] to-[#82a7d9] [&>i]:h-px [&>i]:w-[6px] [&>i]:bg-[#46689e]"><i></i><i></i><i></i></div>
          <button aria-label="Scroll down" class="mt-auto flex h-[14px] items-center justify-center rounded-b-[3px] border-t border-[#8f8d8b] bg-linear-to-b from-white to-[#e4e3e1]"><svg class="size-[9px]"><use href="#down"/></svg></button>
        </div>
      </div>
      <div class="mt-[7px] flex shrink-0 justify-end gap-2 pb-px pr-px [&>button]:flex [&>button]:size-8 [&>button]:items-center [&>button]:justify-center [&>button]:rounded-[3px] [&>button]:border [&>button]:border-[#8f8d8b] [&>button]:bg-linear-to-b [&>button]:from-white [&>button]:to-[#e9e8e6] [&_svg]:size-6">
        <button aria-label="Documentation"><svg viewBox="0 0 24 24"><path d="M18 4h3v16h-3z" fill="#fff"/><path d="M19 4h2v4h-2z" fill="#8ae234"/><path d="M19 8h2v3h-2z" fill="#fcaf3e"/><path d="M19 17h2v2h-2z" fill="#c00"/><path d="M4 3h15v18H4z" fill="#d90009"/><path d="M4 3h4v18H4z" fill="#444"/><path d="M8.500 3.500H18.500V20.500H8.500Z" fill="none" stroke="#a40000"/><text x="9" y="16" font-family="DejaVu Sans" font-weight="bold" font-size="11" fill="#fff">D</text></svg></button>
        <button aria-label="Reset to defaults"><svg viewBox="0 0 24 24"><path d="M13.500 10L17 3C18 .500 21 1.500 20.500 4L17.500 11.500Z" fill="#c98a3a" stroke="#7a4a10"/><path d="M12.500 9.500L18 12L16.500 14.500L10.500 11.500Z" fill="#8f6fa8" stroke="#5c3566" stroke-width=".6"/><path d="M10.500 11.500L17 14.500L14.500 22L3.500 18.500C7 17.500 9 14.500 10.500 11.500Z" fill="#f2dc3c" stroke="#b89a00"/><path d="M12 14L7.500 19.500M14 15L11 20.500" stroke="#c4a800"/></svg></button>
      </div>
    </aside>
  </main>

  <!-- Status bar -->
  <footer class="flex h-6 shrink-0 items-end pl-[3px] pr-[4px]">
    <span class="flex-1 self-start border-b border-t border-b-white border-t-[#b5b3b1]"></span><span class="w-1"></span><svg class="mb-1 size-3"><use href="#corner"/></svg>
  </footer>
</div>
</div>
</body>
</html>
